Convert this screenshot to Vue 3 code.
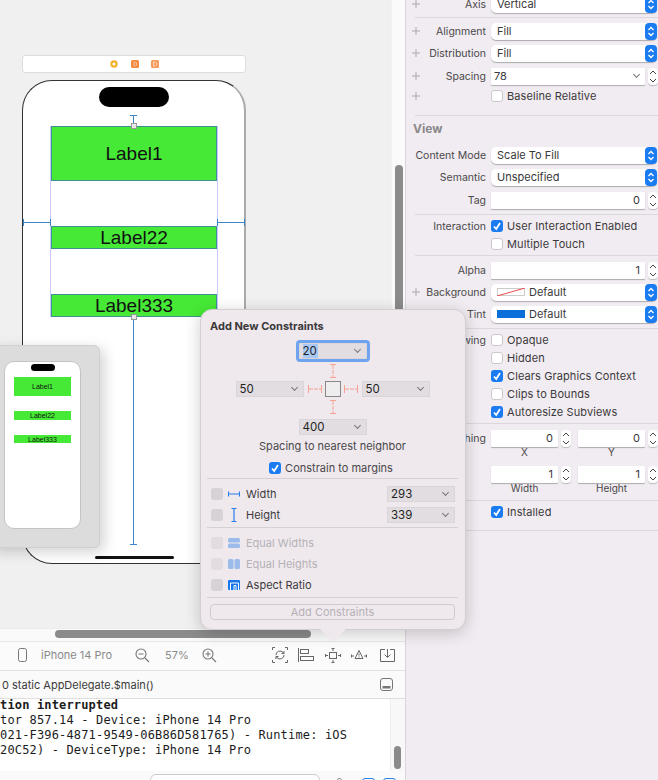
<script setup>
const inspectorRows = [
  { kind: 'select', label: 'Axis', plus: true, value: 'Vertical' },
  { kind: 'sep' },
  { kind: 'select', label: 'Alignment', plus: true, value: 'Fill' },
  { kind: 'select', label: 'Distribution', plus: true, value: 'Fill' },
  { kind: 'combo', label: 'Spacing', plus: true, value: '78', cls: 'mt1' },
  { kind: 'check', label: '', plus: true, text: 'Baseline Relative' },
  { kind: 'sep', cls: 'sep-view' },
  { kind: 'heading', text: 'View' },
  { kind: 'select', label: 'Content Mode', value: 'Scale To Fill' },
  { kind: 'select', label: 'Semantic', value: 'Unspecified' },
  { kind: 'number', label: 'Tag', value: '0', cls: 'mt1 mb1' },
  { kind: 'sep' },
  { kind: 'check', label: 'Interaction', text: 'User Interaction Enabled', checked: true },
  { kind: 'check', label: '', text: 'Multiple Touch' },
  { kind: 'sep' },
  { kind: 'number', label: 'Alpha', value: '1', cls: 'mt1' },
  { kind: 'select', label: 'Background', plus: true, value: 'Default', swatch: 'none' },
  { kind: 'select', label: 'Tint', value: 'Default', swatch: 'blue' },
  { kind: 'sep', cls: 'mt1' },
  { kind: 'check', label: 'Drawing', text: 'Opaque' },
  { kind: 'check', label: '', text: 'Hidden' },
  { kind: 'check', label: '', text: 'Clears Graphics Context', checked: true },
  { kind: 'check', label: '', text: 'Clips to Bounds' },
  { kind: 'check', label: '', text: 'Autoresize Subviews', checked: true },
  { kind: 'sep' },
  { kind: 'pair', label: 'Stretching', a: '0', b: '0', subA: 'X', subB: 'Y', cls: 'mt2' },
  { kind: 'pair', label: '', a: '1', b: '1', subA: 'Width', subB: 'Height', cls: 'mt7' },
  { kind: 'sep', cls: 'sep-tall' },
  { kind: 'check', label: '', text: 'Installed', checked: true },
  { kind: 'sep', cls: 'sep-tall' },
]

const sizeRows = [
  { name: 'Width', value: '293' },
  { name: 'Height', value: '339' },
]

const relationRows = [
  { name: 'Equal Widths', off: true },
  { name: 'Equal Heights', off: true },
  { name: 'Aspect Ratio', off: false },
]

const consoleLines = [
  'tion interrupted',
  'tor 857.14 - Device: iPhone 14 Pro',
  '021-F396-4871-9549-06B86D581765) - Runtime: iOS',
  '20C52) - DeviceType: iPhone 14 Pro',
]

const thumbLabels = [
  { text: 'Label1', cls: 'tall' },
  { text: 'Label22', cls: 'mid' },
  { text: 'Label333', cls: 'low' },
]
</script>

<template>
  <div class="window">
    <div class="editor">
      <div class="canvas">
        <div class="scene-bar">
          <svg width="60" height="12" viewBox="0 0 60 12">
            <circle cx="10" cy="6" r="2.600" fill="#fff" stroke="#f4b02d" stroke-width="2.200" />
            <rect x="27" y="2" width="8" height="8" rx="1.500" fill="#f58a45" />
            <path d="M30 4h1.500l1 1v2l-1 1H30z" fill="none" stroke="#fbd0b0" stroke-width="0.700" transform="translate(0 0)" />
            <rect x="47" y="2" width="8" height="8" rx="1.500" fill="#f79a5b" />
            <path d="M49.500 4h2l1.500 2-1.500 2h-2z" fill="none" stroke="#fde0cc" stroke-width="0.800" />
          </svg>
        </div>

        <div class="phone">
          <div class="island"></div>
          <div class="stack">
            <div class="label tall">Label1</div>
            <div class="label">Label22</div>
            <div class="label">Label333</div>
          </div>
          <div class="home"></div>
          <i class="strut top"></i>
          <i class="strut left"></i>
          <i class="strut right"></i>
          <i class="strut bottom"></i>
          <i class="handle h-top"></i>
          <i class="handle h-bottom"></i>
        </div>

        <div class="thumb">
          <div class="thumb-phone">
            <div class="thumb-island"></div>
            <div v-for="item in thumbLabels" :key="item.text" :class="['thumb-label', item.cls]">{{ item.text }}</div>
          </div>
        </div>

        <div class="v-scroll"><div class="v-thumb"></div></div>
      </div>

      <div class="h-scroll"><div class="h-thumb"></div></div>

      <div class="toolbar">
        <svg class="tb-phone" width="9" height="14" viewBox="0 0 9 14" fill="none" stroke="#777">
          <rect x="0.5" y="0.5" width="8" height="13" rx="2" />
        </svg>
        <span class="device">iPhone 14 Pro</span>
        <svg class="tb-zoom-out" width="15" height="15" viewBox="0 0 15 15" fill="none" stroke="#777" stroke-width="1.100">
          <circle cx="6" cy="6" r="5" /><path d="M3.500 6h5M10 10l4 4" />
        </svg>
        <span class="zoom">57%</span>
        <svg class="tb-zoom-in" width="15" height="15" viewBox="0 0 15 15" fill="none" stroke="#777" stroke-width="1.100">
          <circle cx="6" cy="6" r="5" /><path d="M3.500 6h5M6 3.500v5M10 10l4 4" />
        </svg>
        <svg class="tb-update" width="16" height="16" viewBox="0 0 16 16" fill="none" stroke="#666">
          <path d="M.5 3V.5H3M13 .5h2.500V3M.5 13v2.500H3M13 15.500h2.500V13" />
          <path d="M4 8a4 4 0 0 1 7-2.600l1 1M12 8a4 4 0 0 1-7 2.600l-1-1M12 4v2.500H9.500M4 12V9.500h2.500" />
        </svg>
        <svg class="tb-align" width="16" height="14" viewBox="0 0 16 14" fill="none" stroke="#666">
          <path d="M.5 0v14" /><rect x="2.500" y="1.500" width="8" height="4" /><rect x="2.500" y="8.500" width="13" height="4" />
        </svg>
        <svg class="tb-add" width="16" height="15" viewBox="0 0 16 15" fill="none" stroke="#666">
          <rect x="4.500" y="4.500" width="7" height="6" /><path d="M8 0v3M6.500.5h3M8 12v3M6.500 14.500h3M0 7.500h3M.5 6v3M13 7.500h3M15.500 6v3" />
        </svg>
        <svg class="tb-resolve" width="16" height="12" viewBox="0 0 16 12" fill="none" stroke="#666">
          <path d="M8 1.500l4 8H4zM0 7h3M.5 5.500v3M13 7h3M15.500 5.500v3" /><path d="M8 4.500v2M8 7.500v1" />
        </svg>
        <svg class="tb-embed" width="15" height="13" viewBox="0 0 15 13" fill="none" stroke="#666">
          <path d="M5 .5H.5v12h14V.5H10M7.500 0v8M4.500 5.500l3 3 3-3" />
        </svg>
      </div>

      <div class="debug-bar">
        <span class="frame">0 static AppDelegate.$main()</span>
        <svg width="13" height="13" viewBox="0 0 13 13" fill="none">
          <rect x="0.5" y="0.5" width="12" height="12" rx="2.500" stroke="#777" />
          <rect x="2.500" y="8" width="8" height="2.500" fill="#777" />
        </svg>
      </div>

      <div class="console">
        <div class="log">
          <div v-for="(line, i) in consoleLines" :key="i" :class="['log-line', { strong: i === 0 }]">{{ line }}</div>
        </div>
        <div class="log-scroll"><div class="log-thumb"></div></div>
      </div>

      <div class="filter">
        <div class="search"></div>
        <i class="filter-dot"></i>
        <i class="filter-btn first"></i>
        <i class="filter-btn"></i>
      </div>
    </div>

    <aside class="inspector">
      <div class="rows">
        <template v-for="(row, i) in inspectorRows" :key="i">
          <div v-if="row.kind === 'sep'" :class="['sep', row.cls]"></div>
          <div v-else-if="row.kind === 'heading'" class="heading">{{ row.text }}</div>
          <div v-else-if="row.kind === 'pair'" :class="['pair', row.cls]">
            <div class="row row-pair">
              <span class="row-label">{{ row.label }}</span>
              <div class="pair-cell">
                <div class="field small">{{ row.a }}</div>
                <svg class="stepper" width="10" height="17" viewBox="0 0 10 17" fill="none" stroke="#444"><path d="M2 6l3-3 3 3M2 11l3 3 3-3" /></svg>
              </div>
              <div class="pair-cell second">
                <div class="field small">{{ row.b }}</div>
                <svg class="stepper" width="10" height="17" viewBox="0 0 10 17" fill="none" stroke="#444"><path d="M2 6l3-3 3 3M2 11l3 3 3-3" /></svg>
              </div>
            </div>
            <div class="sub">
              <span>{{ row.subA }}</span>
              <span>{{ row.subB }}</span>
            </div>
          </div>
          <div v-else :class="['row', 'row-' + row.kind, row.cls]">
            <svg v-if="row.plus" class="plus" width="8" height="8" viewBox="0 0 8 8" stroke="#aaa"><path d="M4 0v8M0 4h8" /></svg>
            <span class="row-label">{{ row.label }}</span>

            <div v-if="row.kind === 'select'" class="select">
              <svg v-if="row.swatch === 'none'" class="swatch" width="28" height="8" viewBox="0 0 28 8">
                <rect x="0.5" y="0.5" width="27" height="7" fill="#fff" stroke="#ccc" />
                <path d="M0 8L28 0" stroke="#ee4a48" />
              </svg>
              <span v-else-if="row.swatch" class="swatch blue"></span>
              <span>{{ row.value }}</span>
              <span class="cap">
                <svg width="8" height="11" viewBox="0 0 8 11" fill="none" stroke="#fff" stroke-width="1.300"><path d="M1.500 4L4 1.500 6.500 4M1.500 7L4 9.500 6.500 7" /></svg>
              </span>
            </div>

            <template v-else-if="row.kind === 'combo'">
              <div class="field combo">
                <span>{{ row.value }}</span>
                <i class="chev"></i>
              </div>
              <svg class="stepper" width="10" height="17" viewBox="0 0 10 17" fill="none" stroke="#444"><path d="M2 6l3-3 3 3M2 11l3 3 3-3" /></svg>
            </template>

            <template v-else-if="row.kind === 'number'">
              <div class="field">{{ row.value }}</div>
              <svg class="stepper" width="10" height="17" viewBox="0 0 10 17" fill="none" stroke="#444"><path d="M2 6l3-3 3 3M2 11l3 3 3-3" /></svg>
            </template>

            <template v-else>
              <span :class="['box', { on: row.checked }]">
                <svg v-if="row.checked" width="12" height="12" viewBox="0 0 12 12" fill="none" stroke="#fff" stroke-width="1.800"><path d="M3 6.500l2.200 2.500L9 3" /></svg>
              </span>
              <span class="check-text">{{ row.text }}</span>
            </template>
          </div>
        </template>
      </div>
    </aside>

    <div class="popover">
      <div class="pop-title">Add New Constraints</div>

      <div class="diagram">
        <div class="pop-select focus"><span class="picked">20</span><i class="chev"></i></div>
        <svg class="strut-v" width="12" height="22" viewBox="0 0 12 22" fill="none" stroke="#f5a193">
          <path d="M3 5.500h6M3 18.500h6" />
          <path d="M6 6v12" stroke-dasharray="4 1" />
        </svg>
        <div class="diagram-mid">
          <div class="pop-select"><span>50</span><i class="chev"></i></div>
          <svg width="58" height="16" viewBox="0 0 58 16" fill="none">
            <path d="M4.500 4v8M17.500 4v8M40.500 4v8M53.500 4v8" stroke="#f5a193" />
            <path d="M5 8h12M41 8h12" stroke="#f5a193" stroke-dasharray="4 1" />
            <rect x="21.500" y="0.500" width="15" height="15" fill="#eeeeee" stroke="#888" />
          </svg>
          <div class="pop-select"><span>50</span><i class="chev"></i></div>
        </div>
        <svg class="strut-v" width="12" height="22" viewBox="0 0 12 22" fill="none" stroke="#f5a193">
          <path d="M3 3.500h6M3 16.500h6" />
          <path d="M6 4v12" stroke-dasharray="4 1" />
        </svg>
        <div class="pop-select"><span>400</span><i class="chev"></i></div>
      </div>

      <div class="nearest">Spacing to nearest neighbor</div>
      <div class="margins">
        <span class="box on">
          <svg width="12" height="12" viewBox="0 0 12 12" fill="none" stroke="#fff" stroke-width="1.800"><path d="M3 6.500l2.200 2.500L9 3" /></svg>
        </span>
        <span>Constrain to margins</span>
      </div>
      <div class="pop-sep"></div>

      <div v-for="row in sizeRows" :key="row.name" class="pop-row">
        <i class="pop-box"></i>
        <svg v-if="row.name === 'Width'" class="pop-icon" width="12" height="12" viewBox="0 0 12 12" fill="none" stroke="#2a7fe8">
          <path d="M.5 3.500v5M11.500 3.500v5M1 6h10" stroke-width="1.200" />
        </svg>
        <svg v-else class="pop-icon" width="12" height="14" viewBox="0 0 12 14" fill="none" stroke="#2a7fe8">
          <path d="M3.500 .5h5M3.500 13.500h5M6 1v12" stroke-width="1.200" />
        </svg>
        <span class="pop-name">{{ row.name }}</span>
        <div class="pop-select"><span>{{ row.value }}</span><i class="chev"></i></div>
      </div>
      <div class="pop-sep tight"></div>

      <div v-for="row in relationRows" :key="row.name" :class="['pop-row', { off: row.off }]">
        <i class="pop-box"></i>
        <svg v-if="row.name === 'Equal Widths'" class="pop-icon" width="12" height="10" viewBox="0 0 12 10">
          <rect width="12" height="4.500" rx="1.500" fill="#2a7fe8" /><rect y="5.500" width="12" height="4.500" rx="1.500" fill="#2a7fe8" />
        </svg>
        <svg v-else-if="row.name === 'Equal Heights'" class="pop-icon" width="12" height="10" viewBox="0 0 12 10">
          <rect width="5.500" height="10" rx="1.500" fill="#2a7fe8" /><rect x="6.500" width="5.500" height="10" rx="1.500" fill="#2a7fe8" />
        </svg>
        <svg v-else class="pop-icon" width="12" height="10" viewBox="0 0 12 10">
          <rect width="12" height="10" rx="1" fill="#1576ee" />
          <path d="M2.500 10V3H10.500V10M6 10V5.500H8V10" fill="none" stroke="#fff" stroke-width="1" />
        </svg>
        <span class="pop-name">{{ row.name }}</span>
      </div>
      <div class="pop-sep tight"></div>

      <div class="add-btn">Add Constraints</div>
      <div class="arrow"></div>
    </div>
  </div>
</template>

<style scoped>
.window {
  position: relative;
  display: flex;
  width: 658px;
  height: 780px;
  overflow: hidden;
  font-family: Inter, "Liberation Sans", sans-serif;
  font-size: 11px;
  color: #3c3a3c;
  background: #f1ecf1;
}

.editor {
  display: flex;
  flex-direction: column;
  width: 405px;
  height: 780px;
  flex: none;
  border-right: 1px solid #d8d6d8;
}

.canvas {
  position: relative;
  height: 628px;
  flex: none;
  overflow: hidden;
  background: #f0f0f0;
}

.scene-bar {
  position: absolute;
  left: 22px;
  top: 55px;
  display: flex;
  align-items: center;
  justify-content: center;
  width: 224px;
  height: 18px;
  box-sizing: border-box;
  background: #fff;
  border: 1px solid #dcdcdc;
  border-radius: 3px;
}

.phone {
  position: absolute;
  left: 22px;
  top: 80px;
  width: 224px;
  height: 484px;
  box-sizing: border-box;
  background: #fff;
  border: 1px solid #333;
  border-right: 2px solid #aaa;
  border-radius: 30px;
}

.island {
  position: absolute;
  left: 76px;
  top: 6px;
  width: 70px;
  height: 20px;
  border-radius: 10px;
  background: #000;
}

.stack {
  display: flex;
  flex-direction: column;
  gap: 45px;
  width: 166px;
  margin: 45px 0 0 28px;
  box-sizing: border-box;
  box-shadow: 1px 0 0 #c9c9ff, -1px 0 0 #c9c9ff;
}

.label {
  display: flex;
  align-items: center;
  justify-content: center;
  height: 23px;
  box-sizing: border-box;
  background: #46ea36;
  border: 1px solid #3f9191;
  color: #111;
  font-family: "Liberation Sans", Arial, sans-serif;
  font-size: 19px;
}

.label.tall {
  height: 55px;
}

.home {
  position: absolute;
  left: 72px;
  bottom: 4px;
  width: 79px;
  height: 3px;
  border-radius: 2px;
  background: #111;
}

.strut {
  position: absolute;
  background: #3f86c6;
}

.strut.top {
  left: 110px;
  top: 34px;
  width: 1px;
  height: 11px;
}

.strut.top::before,
.strut.bottom::after {
  content: "";
  position: absolute;
  left: -3px;
  width: 7px;
  height: 1px;
  background: #3f86c6;
}

.strut.top::before {
  top: 0;
}

.strut.left {
  left: 0;
  top: 141px;
  width: 28px;
  height: 1px;
}

.strut.right {
  left: 194px;
  top: 141px;
  width: 28px;
  height: 1px;
}

.strut.left::before,
.strut.left::after,
.strut.right::before,
.strut.right::after {
  content: "";
  position: absolute;
  top: -3px;
  width: 1px;
  height: 7px;
  background: #3f86c6;
}

.strut.left::before,
.strut.right::before {
  left: 0;
}

.strut.left::after,
.strut.right::after {
  right: 0;
}

.strut.bottom {
  left: 110px;
  top: 236px;
  width: 1px;
  height: 228px;
}

.strut.bottom::after {
  bottom: 0;
}

.handle {
  position: absolute;
  left: 108px;
  width: 6px;
  height: 6px;
  background: #e8e8e8;
  border: 1px solid #999;
  box-sizing: border-box;
}

.h-top {
  top: 42px;
}

.h-bottom {
  top: 233px;
}

.thumb {
  position: absolute;
  left: -12px;
  top: 345px;
  width: 112px;
  height: 203px;
  background: #dcdcdc;
  border: 1px solid #cfcfcf;
  box-sizing: border-box;
  border-radius: 6px;
  box-shadow: 4px 4px 14px rgba(0, 0, 0, 0.18);
}

.thumb-phone {
  position: absolute;
  left: 15px;
  top: 15px;
  width: 77px;
  height: 168px;
  background: #fff;
  border: 1px solid #c4c4c4;
  box-sizing: border-box;
  border-radius: 10px;
  padding: 15px 9px 0;
}

.thumb-island {
  position: absolute;
  left: 26px;
  top: 2px;
  width: 24px;
  height: 7px;
  border-radius: 4px;
  background: #000;
}

.thumb-label {
  display: flex;
  align-items: center;
  justify-content: center;
  background: #46ea36;
  color: #111;
  font-size: 7px;
  font-family: "Liberation Sans", sans-serif;
}

.thumb-label.tall {
  height: 19px;
}

.thumb-label.mid {
  height: 9px;
  margin-top: 15px;
}

.thumb-label.low {
  height: 8px;
  margin-top: 15px;
}

.v-scroll {
  position: absolute;
  right: 0;
  top: 0;
  bottom: 0;
  width: 14px;
  background: #fafafa;
  border-left: 1px solid #f2f2f2;
  box-sizing: border-box;
}

.v-thumb {
  width: 8px;
  height: 425px;
  margin: 165px 0 0 3px;
  border-radius: 4px;
  background: #8b8b8b;
}

.h-scroll {
  height: 13px;
  flex: none;
  background: #fafafa;
  border-top: 1px solid #ececec;
  box-sizing: border-box;
}

.h-thumb {
  width: 256px;
  height: 8px;
  margin: 1px 0 0 55px;
  border-radius: 4px;
  background: #8b8b8b;
}

.toolbar {
  display: flex;
  align-items: center;
  height: 30px;
  flex: none;
  box-sizing: border-box;
  background: #fbfbfb;
  border-top: 1px solid #e6e6e6;
  border-bottom: 1px solid #e3e3e3;
  padding: 0 0 2px 18px;
  color: #8a8a8a;
}

.device {
  margin-left: 14px;
  width: 71px;
  white-space: nowrap;
}

.tb-zoom-out {
  margin-left: 23px;
}

.zoom {
  margin-left: 15px;
  width: 24px;
}

.tb-zoom-in {
  margin-left: 13px;
}

.tb-update {
  margin-left: 55px;
}

.tb-align {
  margin-left: 10px;
}

.tb-add {
  margin-left: 11px;
}

.tb-resolve {
  margin-left: 10px;
}

.tb-embed {
  margin-left: 13px;
}

.debug-bar {
  display: flex;
  align-items: center;
  justify-content: space-between;
  height: 28px;
  flex: none;
  box-sizing: border-box;
  padding: 0 12px 0 2px;
  background: #fafafa;
  border-bottom: 1px solid #dedede;
}

.frame {
  color: #3a3a3a;
  white-space: nowrap;
}

.console {
  display: flex;
  height: 72px;
  flex: none;
  background: #fff;
}

.log {
  flex: 1;
  margin-top: -1px;
  overflow: hidden;
}

.log-line {
  height: 15px;
  line-height: 15px;
  font-family: "DejaVu Sans Mono", "Liberation Mono", monospace;
  font-size: 12px;
  letter-spacing: 0.16px;
  color: #1c1c1c;
  white-space: nowrap;
}

.log-line.strong {
  font-weight: 700;
}

.log-scroll {
  width: 15px;
  flex: none;
  background: #f8f8f8;
  border-left: 1px solid #eee;
  box-sizing: border-box;
}

.log-thumb {
  width: 7px;
  height: 23px;
  margin: 47px 0 0 3px;
  border-radius: 4px;
  background: #8b8b8b;
}

.filter {
  display: flex;
  flex: 1;
  background: #fafafa;
  padding: 3px 0 0 150px;
  overflow: hidden;
}

.search {
  width: 170px;
  height: 20px;
  flex: none;
  box-sizing: border-box;
  background: #fff;
  border: 1px solid #ccc;
  border-radius: 6px;
}

.filter-dot {
  width: 5px;
  height: 10px;
  flex: none;
  box-sizing: border-box;
  margin: 4px 0 0 17px;
  border: 1px solid #999;
  border-radius: 2px;
}

.filter-btn {
  width: 13px;
  height: 14px;
  flex: none;
  margin: 4px 0 0 8px;
  box-sizing: border-box;
  border: 1px solid #2a7fe8;
  border-radius: 3px;
}

.filter-btn.first {
  margin-left: 20px;
}

.inspector {
  flex: 1;
  min-width: 0;
  overflow: hidden;
}

.rows {
  display: flex;
  flex-direction: column;
  margin-top: -7px;
}

.row {
  position: relative;
  display: flex;
  align-items: center;
  height: 22px;
  flex: none;
}

.row-check {
  height: 18px;
}

.row-pair {
  height: 20px;
}

.row-label {
  width: 80px;
  flex: none;
  margin-right: 5px;
  text-align: right;
  white-space: nowrap;
  font-size: 10.5px;
  color: #4a484a;
}

.plus {
  position: absolute;
  left: 6px;
  top: 50%;
  margin-top: -4px;
}

.select {
  display: flex;
  align-items: center;
  position: relative;
  width: 166px;
  height: 17px;
  flex: none;
  box-sizing: border-box;
  padding-left: 6px;
  background: #fff;
  border-radius: 5px;
  box-shadow: 0 1px 1px rgba(0, 0, 0, 0.28);
  color: #3a383a;
}

.cap {
  position: absolute;
  right: 0;
  top: 0;
  display: flex;
  align-items: center;
  justify-content: center;
  width: 12px;
  height: 17px;
  border-radius: 4px;
  background: #1a7cf0;
}

.swatch {
  width: 28px;
  height: 8px;
  flex: none;
  margin-right: 4px;
}

.swatch.blue {
  background: #0a6fd8;
}

.field {
  width: 154px;
  height: 17px;
  flex: none;
  box-sizing: border-box;
  padding-right: 5px;
  line-height: 17px;
  text-align: right;
  background: #fff;
  box-shadow: 0 1px 1px rgba(0, 0, 0, 0.28);
  border-radius: 1px;
  color: #3a383a;
}

.field.small {
  width: 67px;
}

.field.combo {
  position: relative;
  padding-left: 3px;
  text-align: left;
}

.chev {
  position: absolute;
  right: 6px;
  top: 50%;
  width: 4px;
  height: 4px;
  margin-top: -4px;
  border-right: 1px solid #777;
  border-bottom: 1px solid #777;
  transform: rotate(45deg);
}

.stepper {
  flex: none;
  margin-left: 3px;
  background: #fff;
  border-radius: 4px;
  box-shadow: 0 1px 1px rgba(0, 0, 0, 0.22);
}

.box {
  display: inline-flex;
  width: 12px;
  height: 12px;
  flex: none;
  box-sizing: border-box;
  background: #fff;
  border: 1px solid #cbc7cb;
  border-radius: 3px;
}

.box.on {
  background: #1a7cf0;
  border: none;
}

.check-text {
  margin-left: 4px;
  white-space: nowrap;
  letter-spacing: 0.1px;
  color: #3c3a3c;
}

.pair {
  flex: none;
}

.pair-cell {
  display: flex;
  align-items: center;
  flex: none;
}

.pair-cell.second {
  margin-left: 7px;
}

.sub {
  display: flex;
  height: 9px;
  line-height: 9px;
  font-size: 10px;
  color: #4a484a;
  padding-left: 85px;
}

.sub span {
  width: 67px;
  text-align: center;
}

.sub span + span {
  margin-left: 20px;
}

.sep {
  height: 1px;
  flex: none;
  margin: 2px 0 2px 9px;
  background: #dcd7dc;
}

.sep-view {
  margin: 10px 0 0 9px;
}

.sep-tall {
  margin: 7px 0 2px 9px;
}

.sep-tall:last-child {
  margin-top: 9px;
}

.heading {
  height: 28px;
  flex: none;
  line-height: 26px;
  padding-left: 7px;
  font-size: 12px;
  font-weight: 700;
  color: #8a878a;
}

.mt1 {
  margin-top: 1px;
}

.mb1 {
  margin-bottom: 1px;
}

.sep.mt1 {
  margin-top: 3px;
}

.mt2 {
  margin-top: 2px;
}

.mt7 {
  margin-top: 7px;
}

.popover {
  position: absolute;
  left: 200px;
  top: 309px;
  width: 266px;
  height: 321px;
  box-sizing: border-box;
  padding: 9px 7px 0 6px;
  background: #efe9ee;
  border: 1px solid #d3ced2;
  border-radius: 12px;
  box-shadow: 0 3px 16px rgba(0, 0, 0, 0.2);
}

.pop-title {
  height: 14px;
  line-height: 14px;
  padding-left: 3px;
  font-weight: 700;
  color: #3a383a;
}

.diagram {
  display: flex;
  flex-direction: column;
  align-items: center;
  margin-top: 10px;
}

.diagram-mid {
  display: flex;
  align-items: center;
}

.strut-v {
  display: block;
}

.pop-select {
  position: relative;
  display: flex;
  align-items: center;
  width: 68px;
  height: 16px;
  flex: none;
  box-sizing: border-box;
  padding-left: 3px;
  background: #e2dde1;
  border: 1px solid #dad5d9;
  color: #1f1f1f;
  font-size: 11.5px;
}

.pop-select.focus {
  outline: 3px solid #6ea3f0;
  border-radius: 1px;
}

.picked {
  background: #a9c8f5;
  padding: 0 1px 0 0;
}

.nearest {
  margin-top: 4px;
  height: 14px;
  line-height: 14px;
  text-align: center;
  color: #4a484a;
}

.margins {
  display: flex;
  align-items: center;
  justify-content: center;
  gap: 4px;
  height: 14px;
  margin-top: 8px;
  padding-right: 3px;
  color: #4a484a;
}

.pop-sep {
  height: 1px;
  margin-top: 3px;
  background: #d5d0d4;
}

.pop-sep.tight {
  margin-top: 2px;
}

.pop-row {
  display: flex;
  align-items: center;
  height: 21px;
  padding-left: 4px;
}

.pop-sep + .pop-row {
  margin-top: 4px;
}

.pop-box {
  width: 12px;
  height: 12px;
  flex: none;
  border-radius: 3px;
  background: #d7d2d6;
}

.pop-icon {
  flex: none;
  margin-left: 5px;
}

.pop-name {
  position: absolute;
  left: 45px;
  color: #3c3a3c;
}

.pop-row .pop-select {
  margin-left: auto;
  margin-right: 3px;
}

.pop-row.off .pop-box {
  opacity: 0.55;
}

.pop-row.off .pop-icon {
  opacity: 0.42;
}

.pop-row.off .pop-name {
  color: #b5b1b5;
}

.add-btn {
  height: 16px;
  line-height: 15px;
  margin: 6px 3px 0;
  box-sizing: border-box;
  text-align: center;
  border: 1px solid #cfcace;
  border-radius: 4px;
  color: #b5b1b5;
}

.arrow {
  position: absolute;
  left: 119px;
  bottom: -13px;
  width: 26px;
  height: 13px;
  background: #efe9ee;
  clip-path: polygon(0 0, 100% 0, 50% 100%);
}
</style>

<style>
html,
body {
  overflow: hidden;
}
</style>
